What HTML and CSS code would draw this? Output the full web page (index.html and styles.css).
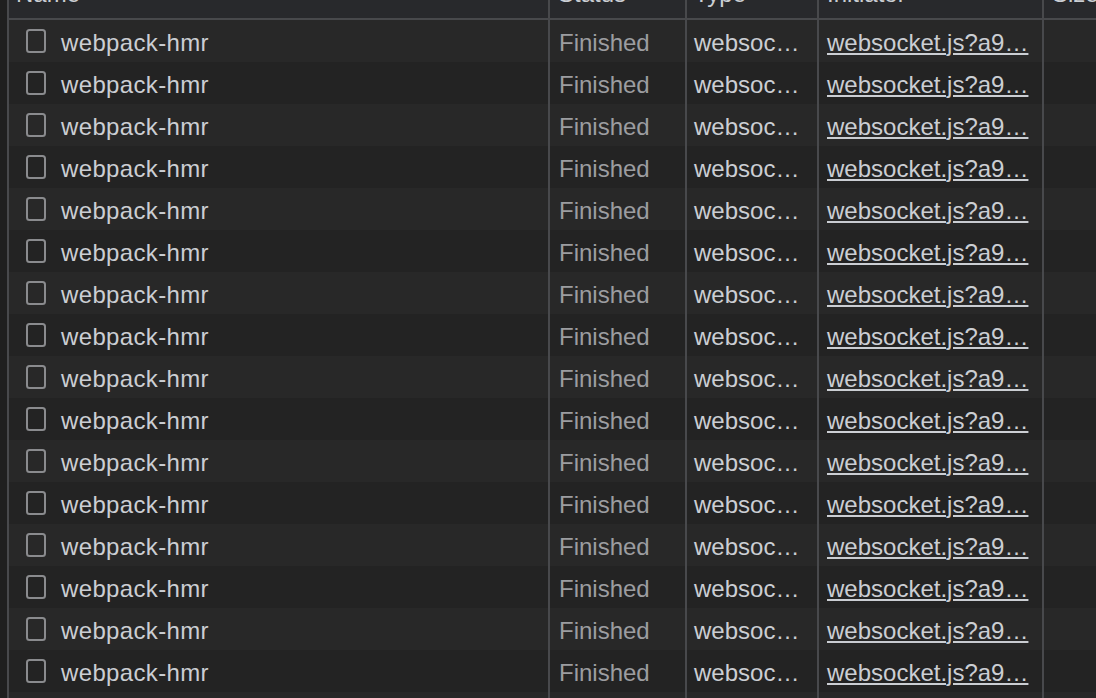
FILE: index.html
```html
<!DOCTYPE html>
<html>
<head>
<meta charset="utf-8">
<link rel="stylesheet" href="styles.css">
</head>
<body>
<div class="panel">
  <div class="table">
    <div class="row head">
      <div class="cell c-name"><span class="h">Name</span></div>
      <div class="cell c-status"><span class="h">Status</span></div>
      <div class="cell c-type"><span class="h">Type</span></div>
      <div class="cell c-init"><span class="h">Initiator</span></div>
      <div class="cell c-size"><span class="h">Size</span></div>
    </div>
    <div class="row"><div class="cell c-name"><svg class="ico" width="20" height="24" viewBox="0 0 20 24"><rect x="1" y="1" width="18" height="22" rx="2.5" fill="none" stroke="#8a8b8e" stroke-width="2"/></svg><span class="t">webpack-hmr</span></div><div class="cell c-status"><span class="t">Finished</span></div><div class="cell c-type"><span class="t">websoc…</span></div><div class="cell c-init"><span class="t link">websocket.js?a9…</span></div><div class="cell c-size"></div></div>
    <div class="row"><div class="cell c-name"><svg class="ico" width="20" height="24" viewBox="0 0 20 24"><rect x="1" y="1" width="18" height="22" rx="2.5" fill="none" stroke="#8a8b8e" stroke-width="2"/></svg><span class="t">webpack-hmr</span></div><div class="cell c-status"><span class="t">Finished</span></div><div class="cell c-type"><span class="t">websoc…</span></div><div class="cell c-init"><span class="t link">websocket.js?a9…</span></div><div class="cell c-size"></div></div>
    <div class="row"><div class="cell c-name"><svg class="ico" width="20" height="24" viewBox="0 0 20 24"><rect x="1" y="1" width="18" height="22" rx="2.5" fill="none" stroke="#8a8b8e" stroke-width="2"/></svg><span class="t">webpack-hmr</span></div><div class="cell c-status"><span class="t">Finished</span></div><div class="cell c-type"><span class="t">websoc…</span></div><div class="cell c-init"><span class="t link">websocket.js?a9…</span></div><div class="cell c-size"></div></div>
    <div class="row"><div class="cell c-name"><svg class="ico" width="20" height="24" viewBox="0 0 20 24"><rect x="1" y="1" width="18" height="22" rx="2.5" fill="none" stroke="#8a8b8e" stroke-width="2"/></svg><span class="t">webpack-hmr</span></div><div class="cell c-status"><span class="t">Finished</span></div><div class="cell c-type"><span class="t">websoc…</span></div><div class="cell c-init"><span class="t link">websocket.js?a9…</span></div><div class="cell c-size"></div></div>
    <div class="row"><div class="cell c-name"><svg class="ico" width="20" height="24" viewBox="0 0 20 24"><rect x="1" y="1" width="18" height="22" rx="2.5" fill="none" stroke="#8a8b8e" stroke-width="2"/></svg><span class="t">webpack-hmr</span></div><div class="cell c-status"><span class="t">Finished</span></div><div class="cell c-type"><span class="t">websoc…</span></div><div class="cell c-init"><span class="t link">websocket.js?a9…</span></div><div class="cell c-size"></div></div>
    <div class="row"><div class="cell c-name"><svg class="ico" width="20" height="24" viewBox="0 0 20 24"><rect x="1" y="1" width="18" height="22" rx="2.5" fill="none" stroke="#8a8b8e" stroke-width="2"/></svg><span class="t">webpack-hmr</span></div><div class="cell c-status"><span class="t">Finished</span></div><div class="cell c-type"><span class="t">websoc…</span></div><div class="cell c-init"><span class="t link">websocket.js?a9…</span></div><div class="cell c-size"></div></div>
    <div class="row"><div class="cell c-name"><svg class="ico" width="20" height="24" viewBox="0 0 20 24"><rect x="1" y="1" width="18" height="22" rx="2.5" fill="none" stroke="#8a8b8e" stroke-width="2"/></svg><span class="t">webpack-hmr</span></div><div class="cell c-status"><span class="t">Finished</span></div><div class="cell c-type"><span class="t">websoc…</span></div><div class="cell c-init"><span class="t link">websocket.js?a9…</span></div><div class="cell c-size"></div></div>
    <div class="row"><div class="cell c-name"><svg class="ico" width="20" height="24" viewBox="0 0 20 24"><rect x="1" y="1" width="18" height="22" rx="2.5" fill="none" stroke="#8a8b8e" stroke-width="2"/></svg><span class="t">webpack-hmr</span></div><div class="cell c-status"><span class="t">Finished</span></div><div class="cell c-type"><span class="t">websoc…</span></div><div class="cell c-init"><span class="t link">websocket.js?a9…</span></div><div class="cell c-size"></div></div>
    <div class="row"><div class="cell c-name"><svg class="ico" width="20" height="24" viewBox="0 0 20 24"><rect x="1" y="1" width="18" height="22" rx="2.5" fill="none" stroke="#8a8b8e" stroke-width="2"/></svg><span class="t">webpack-hmr</span></div><div class="cell c-status"><span class="t">Finished</span></div><div class="cell c-type"><span class="t">websoc…</span></div><div class="cell c-init"><span class="t link">websocket.js?a9…</span></div><div class="cell c-size"></div></div>
    <div class="row"><div class="cell c-name"><svg class="ico" width="20" height="24" viewBox="0 0 20 24"><rect x="1" y="1" width="18" height="22" rx="2.5" fill="none" stroke="#8a8b8e" stroke-width="2"/></svg><span class="t">webpack-hmr</span></div><div class="cell c-status"><span class="t">Finished</span></div><div class="cell c-type"><span class="t">websoc…</span></div><div class="cell c-init"><span class="t link">websocket.js?a9…</span></div><div class="cell c-size"></div></div>
    <div class="row"><div class="cell c-name"><svg class="ico" width="20" height="24" viewBox="0 0 20 24"><rect x="1" y="1" width="18" height="22" rx="2.5" fill="none" stroke="#8a8b8e" stroke-width="2"/></svg><span class="t">webpack-hmr</span></div><div class="cell c-status"><span class="t">Finished</span></div><div class="cell c-type"><span class="t">websoc…</span></div><div class="cell c-init"><span class="t link">websocket.js?a9…</span></div><div class="cell c-size"></div></div>
    <div class="row"><div class="cell c-name"><svg class="ico" width="20" height="24" viewBox="0 0 20 24"><rect x="1" y="1" width="18" height="22" rx="2.5" fill="none" stroke="#8a8b8e" stroke-width="2"/></svg><span class="t">webpack-hmr</span></div><div class="cell c-status"><span class="t">Finished</span></div><div class="cell c-type"><span class="t">websoc…</span></div><div class="cell c-init"><span class="t link">websocket.js?a9…</span></div><div class="cell c-size"></div></div>
    <div class="row"><div class="cell c-name"><svg class="ico" width="20" height="24" viewBox="0 0 20 24"><rect x="1" y="1" width="18" height="22" rx="2.5" fill="none" stroke="#8a8b8e" stroke-width="2"/></svg><span class="t">webpack-hmr</span></div><div class="cell c-status"><span class="t">Finished</span></div><div class="cell c-type"><span class="t">websoc…</span></div><div class="cell c-init"><span class="t link">websocket.js?a9…</span></div><div class="cell c-size"></div></div>
    <div class="row"><div class="cell c-name"><svg class="ico" width="20" height="24" viewBox="0 0 20 24"><rect x="1" y="1" width="18" height="22" rx="2.5" fill="none" stroke="#8a8b8e" stroke-width="2"/></svg><span class="t">webpack-hmr</span></div><div class="cell c-status"><span class="t">Finished</span></div><div class="cell c-type"><span class="t">websoc…</span></div><div class="cell c-init"><span class="t link">websocket.js?a9…</span></div><div class="cell c-size"></div></div>
    <div class="row"><div class="cell c-name"><svg class="ico" width="20" height="24" viewBox="0 0 20 24"><rect x="1" y="1" width="18" height="22" rx="2.5" fill="none" stroke="#8a8b8e" stroke-width="2"/></svg><span class="t">webpack-hmr</span></div><div class="cell c-status"><span class="t">Finished</span></div><div class="cell c-type"><span class="t">websoc…</span></div><div class="cell c-init"><span class="t link">websocket.js?a9…</span></div><div class="cell c-size"></div></div>
    <div class="row"><div class="cell c-name"><svg class="ico" width="20" height="24" viewBox="0 0 20 24"><rect x="1" y="1" width="18" height="22" rx="2.5" fill="none" stroke="#8a8b8e" stroke-width="2"/></svg><span class="t">webpack-hmr</span></div><div class="cell c-status"><span class="t">Finished</span></div><div class="cell c-type"><span class="t">websoc…</span></div><div class="cell c-init"><span class="t link">websocket.js?a9…</span></div><div class="cell c-size"></div></div>
    <div class="row"><div class="cell c-name"></div><div class="cell c-status"></div><div class="cell c-type"></div><div class="cell c-init"></div><div class="cell c-size"></div></div>
  </div>
</div>
</body>
</html>
```
FILE: styles.css
```css
html, body {
  margin: 0;
  padding: 0;
  background: #1f1f1f;
}
body {
  width: 1096px;
  height: 698px;
  overflow: hidden;
  font-family: "Liberation Sans", Arial, sans-serif;
  font-size: 24px;
  color: #cbced3;
}
.panel {
  padding-left: 7px;
  height: 698px;
  overflow: hidden;
}
.table {
  display: flex;
  flex-direction: column;
}
.row {
  display: grid;
  grid-template-columns: 541px 137px 132px 225px 1fr;
  height: 42px;
  background: #282828;
}
.row:nth-child(odd) {
  background: #232323;
}
.row.head {
  height: 17.5px;
  background: #28292c;
  border-bottom: 2px solid #48494c;
  overflow: hidden;
}
.cell {
  border-left: 2px solid #48494c;
  display: flex;
  align-items: center;
  padding-left: 7px;
  overflow: hidden;
  white-space: nowrap;
}
.head .cell {
  align-items: flex-start;
}
.c-name {
  padding-left: 17px;
}
.head .c-name {
  padding-left: 7px;
}
.c-status {
  padding-left: 9px;
}
.head .c-status {
  padding-left: 8px;
}
.c-init, .c-size {
  padding-left: 8px;
}
.h {
  line-height: 24px;
  margin-top: -18.3px;
  color: #cbced3;
}
.ico {
  flex: none;
  margin-right: 15px;
}
.t {
  line-height: 24px;
  padding-top: 4px;
}
.c-name .t {
  letter-spacing: 0.35px;
}
.c-status .t {
  color: #9c9da0;
}
.link {
  text-decoration: underline;
  text-decoration-thickness: 2px;
  text-underline-offset: 2px;
}
```
